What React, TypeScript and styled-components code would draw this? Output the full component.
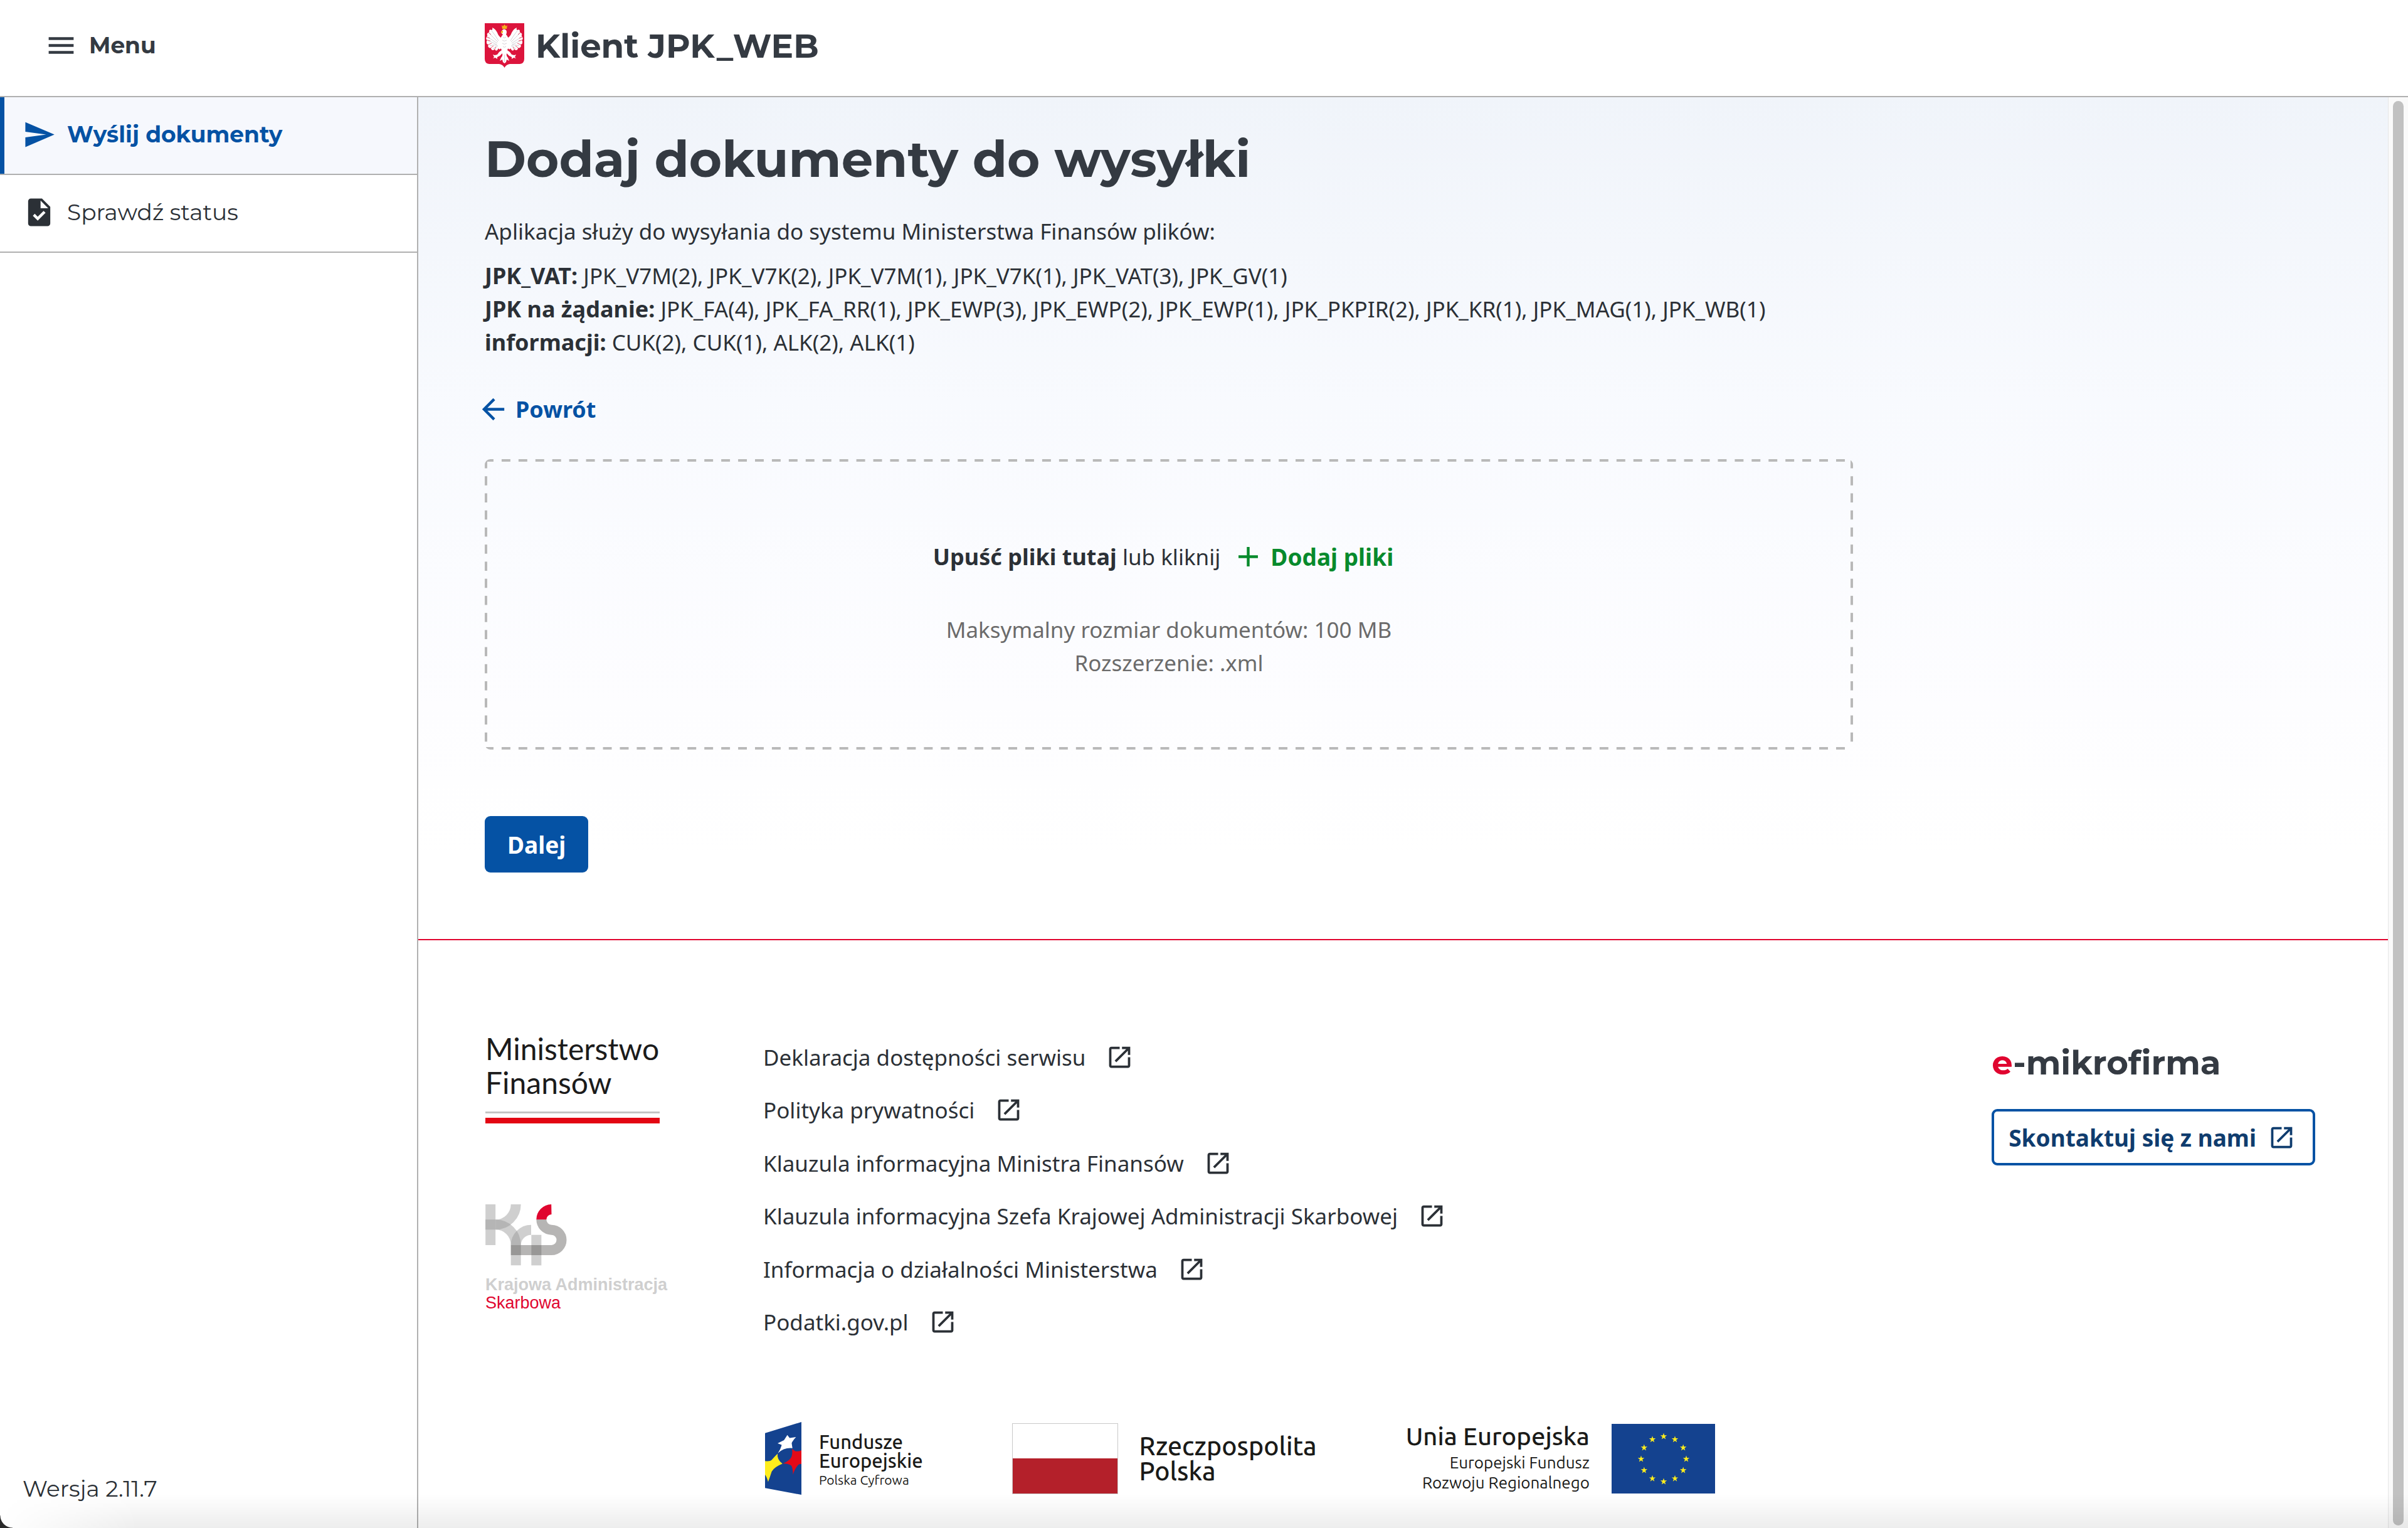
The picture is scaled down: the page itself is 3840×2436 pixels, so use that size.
import React from "react";
import styled, { createGlobalStyle, css } from "styled-components";

const ink = "#343a42";
const blue = "#0552a4";
const line = "#b0b0b0";
const red = "#e0052f";
const heading = `Montserrat, Inter, "Noto Sans", sans-serif`;
const body = `"Noto Sans", "Open Sans", sans-serif`;
const signage = `Ubuntu, "Noto Sans", sans-serif`;

const Global = createGlobalStyle`
  * { box-sizing: border-box; }
  body { margin: 0; background: #fff; color: #2b3036; font: 400 35px/53px ${body}; }
  h1, h2, p, ul { margin: 0; padding: 0; }
  ul { list-style: none; }
  a { color: inherit; text-decoration: none; }
  b { font-size: 36px; line-height: 1; }
  button { font: inherit; color: inherit; background: none; border: 0; padding: 0; cursor: pointer; }
  svg { display: block; flex: none; }
`;

const Page = styled.div`
  position: relative;
  display: flex;
  flex-direction: column;
  min-height: 100vh;
  overflow: hidden;
`;

const Header = styled.header`
  display: grid;
  grid-template-columns: 667px 1fr;
  align-items: center;
  height: 155px;
  padding-bottom: 8px;
  border-bottom: 2px solid ${line};
  color: ${ink};
`;

const MenuButton = styled.button`
  display: flex;
  align-items: center;
  gap: 18px;
  justify-self: start;
  margin-left: 71px;
  font: 700 36px/53px ${heading};
`;

const Brand = styled.a`
  display: flex;
  align-items: center;
  gap: 18px;
  padding-left: 106px;
  font: 700 53px/64px ${heading};
`;

const Columns = styled.div`
  display: flex;
  flex: 1;
`;

const Sidebar = styled.nav`
  display: flex;
  flex-direction: column;
  justify-content: space-between;
  width: 667px;
  flex: none;
  border-right: 2px solid ${line};
`;

const NavItem = styled.li`
  border-bottom: 2px solid ${line};
`;

const NavLink = styled.a<{ $active?: boolean }>`
  display: flex;
  align-items: center;
  gap: 18px;
  height: 122px;
  padding: 0 0 4px 29px;
  border-left: 7px solid transparent;
  font: 400 36px/53px ${heading};
  ${(p) =>
    p.$active &&
    css`
      border-left-color: ${blue};
      background: #f6f8fd;
      color: ${blue};
      font-weight: 700;
    `}
`;

const Version = styled.p`
  padding: 0 36px 36px;
  font: 400 36px/53px ${heading};
`;

const Main = styled.main`
  flex: 1;
  min-width: 0;
`;

const Upload = styled.section`
  display: flex;
  flex-direction: column;
  align-items: flex-start;
  padding: 51px 106px 106px;
  background: linear-gradient(#f0f4fa, #f8fafe 36%, #fdfdff 72%, #fff 90%);
`;

const Title = styled.h1`
  color: ${ink};
  font: 700 80px/96px ${heading};
`;

const Intro = styled.p`
  margin-top: 40px;
`;

const Formats = styled.ul`
  margin-top: 18px;
`;

const BackLink = styled.a`
  display: flex;
  align-items: center;
  gap: 9px;
  margin: 54px 0 0 -13px;
  color: ${blue};
  font-size: 36px;
  font-weight: 700;
`;

const dash = "linear-gradient(90deg, #b9b9b9 52%, transparent 0)";
const dashDown = "linear-gradient(#b9b9b9 52%, transparent 0)";

const DropZone = styled.div`
  display: flex;
  flex-direction: column;
  align-items: center;
  width: 100%;
  max-width: 2182px;
  margin-top: 53px;
  padding: 129px 0 112px;
  border-radius: 9px;
  background:
    ${dash} 0 0 / 27px 4px round no-repeat,
    ${dash} 0 100% / 27px 4px round no-repeat,
    ${dashDown} 0 0 / 4px 27px no-repeat round,
    ${dashDown} 100% 0 / 4px 27px no-repeat round;
`;

const DropLine = styled.div`
  display: flex;
  align-items: center;
`;

const AddButton = styled.button`
  display: flex;
  align-items: center;
  gap: 9px;
  padding: 0 18px;
  color: #078a2c;
  font-size: 37px;
  font-weight: 700;
`;

const Hint = styled.p`
  margin-top: 63px;
  color: #6b6b6b;
  text-align: center;
`;

const NextButton = styled.button`
  height: 90px;
  margin-top: 106px;
  padding: 0 36px;
  border-radius: 9px;
  background: ${blue};
  color: #fff;
  font-size: 37px;
  font-weight: 700;
`;

const Footer = styled.footer`
  display: grid;
  grid-template-columns: 443px 1fr auto;
  align-items: start;
  padding: 144px 116px 53px 107px;
  border-top: 2px solid ${red};
`;

const Ministry = styled.div`
  width: 278px;
  padding-top: 2px;
  color: #1b1b1b;
  font: 400 48px/54px Lato, sans-serif;

  &::after {
    content: "";
    display: block;
    height: 19px;
    margin-top: 19px;
    background: linear-gradient(#c4c4c4 3px, transparent 3px 10px, #e30613 10px);
  }
`;

const Revenue = styled.div`
  margin-top: 129px;
  color: #cfcfcf;
  font: 700 27px/29px "Liberation Sans", Arial, sans-serif;
  white-space: nowrap;

  svg { margin-bottom: 16px; }
`;

const RevenueRed = styled.div`
  color: ${red};
  font-weight: 400;
`;

const FooterLinks = styled.ul`
  display: grid;
  grid-auto-rows: 1fr;
  height: 507px;
`;

const FooterLink = styled.a`
  display: flex;
  align-items: center;
  gap: 32px;
  height: 100%;
`;

const Contact = styled.div`
  display: flex;
  flex-direction: column;
  align-items: flex-start;
  gap: 42px;
  padding-top: 19px;
`;

const Micro = styled.h2`
  color: ${ink};
  font: 700 53px/64px ${heading};

  span { color: ${red}; }
`;

const ContactLink = styled.a`
  display: flex;
  align-items: center;
  gap: 18px;
  height: 90px;
  padding: 0 27px 0 23px;
  border: 4px solid ${blue};
  border-radius: 9px;
  color: #0f3c6e;
  font-size: 37px;
  font-weight: 700;
`;

const Funding = styled.div`
  display: flex;
  align-items: center;
  gap: 142px;
  height: 116px;
  margin-top: 117px;
  padding-left: 3px;
  color: #1a1a18;
  font-family: ${signage};
  white-space: nowrap;
`;

const Fund = styled.div<{ $gap: number }>`
  display: flex;
  align-items: center;
  gap: ${(p) => p.$gap}px;
`;

const FundText = styled.div<{ $size: number; $line: number; $top?: number; $right?: boolean }>`
  padding-top: ${(p) => p.$top ?? 0}px;
  font-size: ${(p) => p.$size}px;
  line-height: ${(p) => p.$line}px;
  font-weight: 500;
  text-align: ${(p) => (p.$right ? "right" : "left")};
`;

const Small = styled.div<{ $size: number; $line: number; $top?: number }>`
  margin-top: ${(p) => p.$top ?? 0}px;
  font-size: ${(p) => p.$size}px;
  line-height: ${(p) => p.$line}px;
  font-weight: 400;
`;

const PolishFlag = styled.div`
  width: 169px;
  height: 113px;
  border: 1px solid #c9c9c9;
  background: linear-gradient(#fff 50%, #b4202a 50%);
`;

const ScrollTrack = styled.div`
  flex: none;
  width: 32px;
  padding: 6px 7px 4px;
  border-left: 1px solid #e6e6e6;
  background: #fafafa;
`;

const ScrollThumb = styled.div`
  height: 100%;
  border-radius: 9px;
  background: #c1c1c1;
`;

const BottomShade = styled.div`
  position: absolute;
  inset: auto 0 0 0;
  height: 54px;
  background: linear-gradient(rgba(0, 0, 0, 0), rgba(0, 0, 0, 0.07));
  mask-image: linear-gradient(90deg, transparent, #000 220px);
  pointer-events: none;
`;

const Corner = styled.div`
  position: absolute;
  left: 0;
  bottom: 0;
  width: 20px;
  height: 20px;
  background: radial-gradient(circle at 100% 0, transparent 19px, #2b2b2b 20px);
`;

const icons = {
  menu: "M3 18h18v-2H3v2zm0-5h18v-2H3v2zm0-7v2h18V6H3z",
  send: "M2.01 21L23 12 2.01 3 2 10l15 2-15 2z",
  task: "M14 2H6c-1.1 0-1.99.9-1.99 2L4 20c0 1.1.89 2 1.99 2H18c1.1 0 2-.9 2-2V8l-6-6zm-3.06 16L7.4 14.46l1.41-1.41 2.12 2.12 4.24-4.24 1.41 1.41L10.94 18zM13 9V3.5L18.5 9H13z",
  back: "M20 11H7.83l5.59-5.59L12 4l-8 8 8 8 1.41-1.41L7.83 13H20v-2z",
  add: "M19 13h-6v6h-2v-6H5v-2h6V5h2v6h6v2z",
  open: "M19 19H5V5h7V3H5c-1.11 0-2 .9-2 2v14c0 1.1.89 2 2 2h14c1.1 0 2-.9 2-2v-7h-2v7zM14 3v2h3.59l-9.83 9.83 1.41 1.41L19 6.41V10h2V3h-7z",
};

const Icon = ({ name, size = 53 }: { name: keyof typeof icons; size?: number }) => (
  <svg width={size} height={size} viewBox="0 0 24 24" fill="currentColor" aria-hidden="true">
    <path d={icons[name]} />
  </svg>
);

const Wing = () => (
  <g>
    <path
      fill="#fff"
      d="M27 24 Q22 21 20 15 Q17 9 12 7 Q13 10 11 11 Q8 9 7 12 Q8 14 6 15 Q3 16 4 19 Q5 20 3 22 Q1 25 4 27 Q2 29 3 32 Q4 34 6 34 Q4 37 7 39 Q9 40 10 39 Q10 43 13 43 Q15 43 16 41 Q17 45 20 43 L22 40 Q23 43 25 41 L28 38 Z"
    />
    <path
      fill="none"
      stroke="#c9c4cc"
      strokeWidth="0.8"
      d="M11 12 Q16 18 22 28 M7 16 Q13 22 21 30 M5 22 Q12 27 20 32 M5 28 Q12 30 19 34 M8 36 Q14 34 20 35 M13 41 Q17 37 21 36"
    />
    <path
      fill="none"
      stroke="#dc143c"
      strokeWidth="0.7"
      d="M6 15L10 18 M3 22L8 24 M4 27L9 28 M6 34L11 32 M10 39L14 36 M16 41L18 38"
    />
  </g>
);

const Emblem = () => (
  <svg width="63" height="71" viewBox="0 0 63 71" aria-hidden="true">
    <path fill="#dc143c" d="M0 0H63V57Q63 64 56 65H40Q34 66 31.500 71Q29 66 23 65H7Q0 64 0 57Z" />
    <Wing />
    <g transform="matrix(-1 0 0 1 63 0)">
      <Wing />
    </g>
    <path
      fill="#fff"
      d="M28 11 Q31 8 34 11 Q36 14 34 18 Q38 22 38 28 Q39 37 36 43 Q40 45 43 50 L47 51 L50 50 L48 54 L50 56 L46 55 L43 57 L43 54 L39 52 L35 48 Q34 52 37 55 L39 60 L35 58 L34 62 L31.500 64 L29 62 L28 58 L24 60 L26 55 Q29 52 28 48 L24 52 L20 54 L20 57 L17 55 L13 56 L15 54 L13 50 L16 51 L20 50 Q23 45 27 43 Q24 37 25 28 Q25 22 29 18 L26 15 Z"
    />
    <path fill="none" stroke="#c9c4cc" strokeWidth="0.8" d="M29 22Q31 25 34 22M28 27Q31 30 35 27M28 32Q31 35 35 32M29 37Q31 40 34 37M31.500 50V62" />
    <path fill="#f3b31c" d="M27 3L29 5L31.500 2L34 5L36 3L35 9H28Z M26 13L29 12V15L26 16Z" />
  </svg>
);

const RevenueMark = () => (
  <svg width="130" height="98" viewBox="102 900 390 294" fill="none" strokeWidth="48" aria-hidden="true">
    <g stroke="#969696" strokeOpacity="0.458">
      <path d="M126.500 900V1095" />
      <path d="M248 900A97 97 0 0 1 151 997" />
      <path d="M102 997H151A97 97 0 0 1 248 1095" />
      <path d="M248 1192V1095A73 73 0 0 1 321 1022" />
      <path d="M346 1046V1192" />
    </g>
    <path d="M418 924A49 49 0 0 0 370 973" stroke="#e0052f" />
    <path d="M370 973A49 49 0 0 0 418 1022A48.500 48.500 0 0 1 418 1119H224" stroke="#3c3a38" strokeOpacity="0.375" />
  </svg>
);

const FundsMark = () => (
  <svg width="58" height="116" viewBox="98 111 142 347" preserveAspectRatio="none" aria-hidden="true">
    <path fill="#14428f" d="M98 164L240 111V458L98 426Z" />
    <path fill="#fff" d="M185 173L194 187L219 183Q206 200 202 212L205 236Q172 232 148 260Q160 237 163 220L147 213L172 198Z" />
    <path fill="#ffed1c" d="M147 262Q144 290 166 310Q135 325 124 347Q118 370 110 397Q106 375 98 362V297Q118 300 124 292Q136 275 147 262Z" />
    <path fill="#e30a18" d="M203 239L216 250Q228 252 240 246V311L230 313Q215 330 207 362Q207 335 201 320Q190 308 168 309Q196 295 202 275Q206 255 203 239Z" />
  </svg>
);

const starPoints = (cx: number, cy: number, r: number) =>
  Array.from({ length: 10 }, (_, i) => {
    const a = (Math.PI / 5) * i - Math.PI / 2;
    const d = i % 2 ? r * 0.39 : r;
    return `${cx + d * Math.cos(a)},${cy + d * Math.sin(a)}`;
  }).join(" ");

const EuropeFlag = () => (
  <svg width="165" height="111" viewBox="0 0 165 111" aria-hidden="true">
    <rect width="165" height="111" fill="#14428f" />
    {Array.from({ length: 12 }, (_, i) => {
      const a = (Math.PI / 6) * i;
      return <polygon key={i} fill="#ffed1c" points={starPoints(83 + 36 * Math.cos(a), 56 + 36 * Math.sin(a), 5.5)} />;
    })}
  </svg>
);

const formats = [
  ["JPK_VAT:", "JPK_V7M(2), JPK_V7K(2), JPK_V7M(1), JPK_V7K(1), JPK_VAT(3), JPK_GV(1)"],
  [
    "JPK na żądanie:",
    "JPK_FA(4), JPK_FA_RR(1), JPK_EWP(3), JPK_EWP(2), JPK_EWP(1), JPK_PKPIR(2), JPK_KR(1), JPK_MAG(1), JPK_WB(1)",
  ],
  ["informacji:", "CUK(2), CUK(1), ALK(2), ALK(1)"],
];

const links = [
  "Deklaracja dostępności serwisu",
  "Polityka prywatności",
  "Klauzula informacyjna Ministra Finansów",
  "Klauzula informacyjna Szefa Krajowej Administracji Skarbowej",
  "Informacja o działalności Ministerstwa",
  "Podatki.gov.pl",
];

export default function App() {
  return (
    <Page>
      <Global />
      <Header>
        <MenuButton type="button">
          <Icon name="menu" />
          Menu
        </MenuButton>
        <Brand href="#">
          <Emblem />
          Klient JPK_WEB
        </Brand>
      </Header>
      <Columns>
        <Sidebar>
          <ul>
            <NavItem>
              <NavLink href="#" $active>
                <Icon name="send" />
                Wyślij dokumenty
              </NavLink>
            </NavItem>
            <NavItem>
              <NavLink href="#">
                <Icon name="task" />
                Sprawdź status
              </NavLink>
            </NavItem>
          </ul>
          <Version>Wersja 2.11.7</Version>
        </Sidebar>
        <Main>
          <Upload>
            <Title>Dodaj dokumenty do wysyłki</Title>
            <Intro>Aplikacja służy do wysyłania do systemu Ministerstwa Finansów plików:</Intro>
            <Formats>
              {formats.map(([name, list]) => (
                <li key={name}>
                  <b>{name}</b> {list}
                </li>
              ))}
            </Formats>
            <BackLink href="#">
              <Icon name="back" />
              Powrót
            </BackLink>
            <DropZone>
              <DropLine>
                <span>
                  <b>Upuść pliki tutaj</b> lub kliknij
                </span>
                <AddButton type="button">
                  <Icon name="add" />
                  Dodaj pliki
                </AddButton>
              </DropLine>
              <Hint>
                Maksymalny rozmiar dokumentów: 100 MB
                <br />
                Rozszerzenie: .xml
              </Hint>
            </DropZone>
            <NextButton type="button">Dalej</NextButton>
          </Upload>
          <Footer>
            <div>
              <Ministry>
                Ministerstwo
                <br />
                Finansów
              </Ministry>
              <Revenue>
                <RevenueMark />
                Krajowa Administracja
                <RevenueRed>Skarbowa</RevenueRed>
              </Revenue>
            </div>
            <div>
              <FooterLinks>
                {links.map((text) => (
                  <li key={text}>
                    <FooterLink href="#">
                      {text}
                      <Icon name="open" size={45} />
                    </FooterLink>
                  </li>
                ))}
              </FooterLinks>
              <Funding>
                <Fund $gap={28}>
                  <FundsMark />
                  <FundText $size={31} $line={30} $top={8}>
                    Fundusze
                    <br />
                    Europejskie
                    <Small $size={21} $line={30}>
                      Polska Cyfrowa
                    </Small>
                  </FundText>
                </Fund>
                <Fund $gap={34}>
                  <PolishFlag />
                  <FundText $size={41} $line={40}>
                    Rzeczpospolita
                    <br />
                    Polska
                  </FundText>
                </Fund>
                <Fund $gap={35}>
                  <FundText $size={40} $line={40} $right>
                    Unia Europejska
                    <Small $size={26} $line={32} $top={6}>
                      Europejski Fundusz
                      <br />
                      Rozwoju Regionalnego
                    </Small>
                  </FundText>
                  <EuropeFlag />
                </Fund>
              </Funding>
            </div>
            <Contact>
              <Micro>
                <span>e</span>-mikrofirma
              </Micro>
              <ContactLink href="#">
                Skontaktuj się z nami
                <Icon name="open" size={45} />
              </ContactLink>
            </Contact>
          </Footer>
        </Main>
        <ScrollTrack>
          <ScrollThumb />
        </ScrollTrack>
      </Columns>
      <BottomShade />
      <Corner />
    </Page>
  );
}
